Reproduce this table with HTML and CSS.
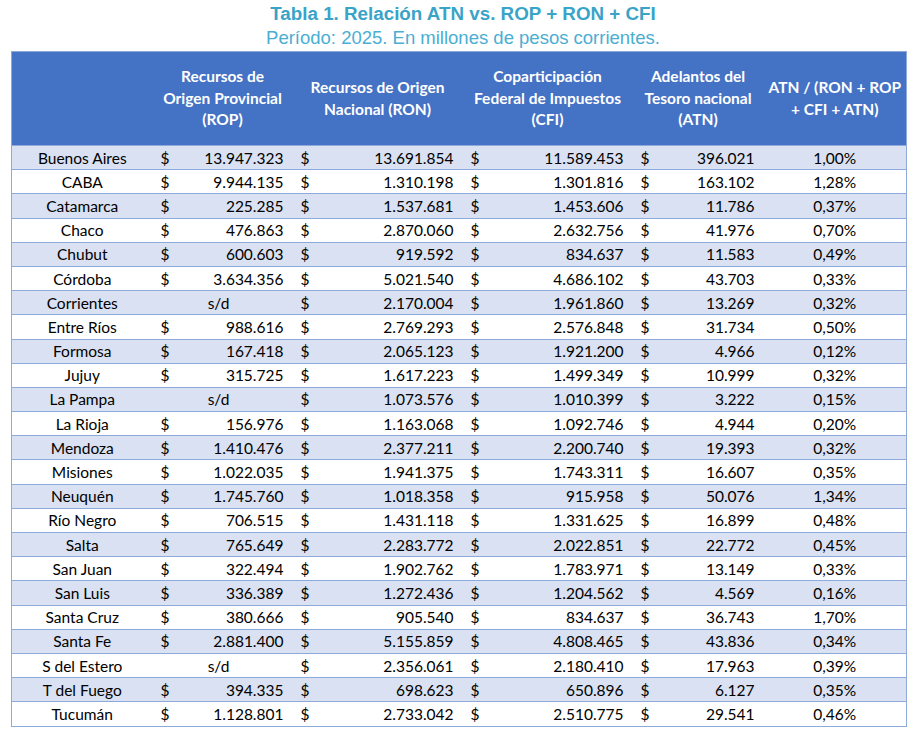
FILE: index.html
```html
<!DOCTYPE html>
<html lang="es">
<head>
<meta charset="utf-8">
<link rel="stylesheet" href="styles.css">
</head>
<body>
<div class="title">Tabla 1. Relación ATN vs. ROP + RON + CFI</div>
<div class="subtitle">Período: 2025. En millones de pesos corrientes.</div>
<table class="tbl">
<colgroup>
<col class="c-prov"><col class="c-rop-s"><col class="c-rop-n"><col class="c-ron-s"><col class="c-ron-n"><col class="c-cfi-s"><col class="c-cfi-n"><col class="c-atn-s"><col class="c-atn-n"><col class="c-pct">
</colgroup>
<thead>
<tr>
<th></th>
<th colspan="2">Recursos de<br>Origen Provincial<br>(ROP)</th>
<th colspan="2">Recursos de Origen<br>Nacional (RON)</th>
<th colspan="2">Coparticipación<br>Federal de Impuestos<br>(CFI)</th>
<th colspan="2">Adelantos del<br>Tesoro nacional<br>(ATN)</th>
<th>ATN / (RON + ROP<br>+ CFI + ATN)</th>
</tr>
</thead>
<tbody>
<tr><td class="prov">Buenos Aires</td><td class="s">$</td><td class="n">13.947.323</td><td class="s">$</td><td class="n">13.691.854</td><td class="s">$</td><td class="n">11.589.453</td><td class="s">$</td><td class="n">396.021</td><td class="p">1,00%</td></tr>
<tr><td class="prov">CABA</td><td class="s">$</td><td class="n">9.944.135</td><td class="s">$</td><td class="n">1.310.198</td><td class="s">$</td><td class="n">1.301.816</td><td class="s">$</td><td class="n">163.102</td><td class="p">1,28%</td></tr>
<tr><td class="prov">Catamarca</td><td class="s">$</td><td class="n">225.285</td><td class="s">$</td><td class="n">1.537.681</td><td class="s">$</td><td class="n">1.453.606</td><td class="s">$</td><td class="n">11.786</td><td class="p">0,37%</td></tr>
<tr><td class="prov">Chaco</td><td class="s">$</td><td class="n">476.863</td><td class="s">$</td><td class="n">2.870.060</td><td class="s">$</td><td class="n">2.632.756</td><td class="s">$</td><td class="n">41.976</td><td class="p">0,70%</td></tr>
<tr><td class="prov">Chubut</td><td class="s">$</td><td class="n">600.603</td><td class="s">$</td><td class="n">919.592</td><td class="s">$</td><td class="n">834.637</td><td class="s">$</td><td class="n">11.583</td><td class="p">0,49%</td></tr>
<tr><td class="prov">Córdoba</td><td class="s">$</td><td class="n">3.634.356</td><td class="s">$</td><td class="n">5.021.540</td><td class="s">$</td><td class="n">4.686.102</td><td class="s">$</td><td class="n">43.703</td><td class="p">0,33%</td></tr>
<tr><td class="prov">Corrientes</td><td class="sd" colspan="2">s/d</td><td class="s">$</td><td class="n">2.170.004</td><td class="s">$</td><td class="n">1.961.860</td><td class="s">$</td><td class="n">13.269</td><td class="p">0,32%</td></tr>
<tr><td class="prov">Entre Ríos</td><td class="s">$</td><td class="n">988.616</td><td class="s">$</td><td class="n">2.769.293</td><td class="s">$</td><td class="n">2.576.848</td><td class="s">$</td><td class="n">31.734</td><td class="p">0,50%</td></tr>
<tr><td class="prov">Formosa</td><td class="s">$</td><td class="n">167.418</td><td class="s">$</td><td class="n">2.065.123</td><td class="s">$</td><td class="n">1.921.200</td><td class="s">$</td><td class="n">4.966</td><td class="p">0,12%</td></tr>
<tr><td class="prov">Jujuy</td><td class="s">$</td><td class="n">315.725</td><td class="s">$</td><td class="n">1.617.223</td><td class="s">$</td><td class="n">1.499.349</td><td class="s">$</td><td class="n">10.999</td><td class="p">0,32%</td></tr>
<tr><td class="prov">La Pampa</td><td class="sd" colspan="2">s/d</td><td class="s">$</td><td class="n">1.073.576</td><td class="s">$</td><td class="n">1.010.399</td><td class="s">$</td><td class="n">3.222</td><td class="p">0,15%</td></tr>
<tr><td class="prov">La Rioja</td><td class="s">$</td><td class="n">156.976</td><td class="s">$</td><td class="n">1.163.068</td><td class="s">$</td><td class="n">1.092.746</td><td class="s">$</td><td class="n">4.944</td><td class="p">0,20%</td></tr>
<tr><td class="prov">Mendoza</td><td class="s">$</td><td class="n">1.410.476</td><td class="s">$</td><td class="n">2.377.211</td><td class="s">$</td><td class="n">2.200.740</td><td class="s">$</td><td class="n">19.393</td><td class="p">0,32%</td></tr>
<tr><td class="prov">Misiones</td><td class="s">$</td><td class="n">1.022.035</td><td class="s">$</td><td class="n">1.941.375</td><td class="s">$</td><td class="n">1.743.311</td><td class="s">$</td><td class="n">16.607</td><td class="p">0,35%</td></tr>
<tr><td class="prov">Neuquén</td><td class="s">$</td><td class="n">1.745.760</td><td class="s">$</td><td class="n">1.018.358</td><td class="s">$</td><td class="n">915.958</td><td class="s">$</td><td class="n">50.076</td><td class="p">1,34%</td></tr>
<tr><td class="prov">Río Negro</td><td class="s">$</td><td class="n">706.515</td><td class="s">$</td><td class="n">1.431.118</td><td class="s">$</td><td class="n">1.331.625</td><td class="s">$</td><td class="n">16.899</td><td class="p">0,48%</td></tr>
<tr><td class="prov">Salta</td><td class="s">$</td><td class="n">765.649</td><td class="s">$</td><td class="n">2.283.772</td><td class="s">$</td><td class="n">2.022.851</td><td class="s">$</td><td class="n">22.772</td><td class="p">0,45%</td></tr>
<tr><td class="prov">San Juan</td><td class="s">$</td><td class="n">322.494</td><td class="s">$</td><td class="n">1.902.762</td><td class="s">$</td><td class="n">1.783.971</td><td class="s">$</td><td class="n">13.149</td><td class="p">0,33%</td></tr>
<tr><td class="prov">San Luis</td><td class="s">$</td><td class="n">336.389</td><td class="s">$</td><td class="n">1.272.436</td><td class="s">$</td><td class="n">1.204.562</td><td class="s">$</td><td class="n">4.569</td><td class="p">0,16%</td></tr>
<tr><td class="prov">Santa Cruz</td><td class="s">$</td><td class="n">380.666</td><td class="s">$</td><td class="n">905.540</td><td class="s">$</td><td class="n">834.637</td><td class="s">$</td><td class="n">36.743</td><td class="p">1,70%</td></tr>
<tr><td class="prov">Santa Fe</td><td class="s">$</td><td class="n">2.881.400</td><td class="s">$</td><td class="n">5.155.859</td><td class="s">$</td><td class="n">4.808.465</td><td class="s">$</td><td class="n">43.836</td><td class="p">0,34%</td></tr>
<tr><td class="prov">S del Estero</td><td class="sd" colspan="2">s/d</td><td class="s">$</td><td class="n">2.356.061</td><td class="s">$</td><td class="n">2.180.410</td><td class="s">$</td><td class="n">17.963</td><td class="p">0,39%</td></tr>
<tr><td class="prov">T del Fuego</td><td class="s">$</td><td class="n">394.335</td><td class="s">$</td><td class="n">698.623</td><td class="s">$</td><td class="n">650.896</td><td class="s">$</td><td class="n">6.127</td><td class="p">0,35%</td></tr>
<tr><td class="prov">Tucumán</td><td class="s">$</td><td class="n">1.128.801</td><td class="s">$</td><td class="n">2.733.042</td><td class="s">$</td><td class="n">2.510.775</td><td class="s">$</td><td class="n">29.541</td><td class="p">0,46%</td></tr>
</tbody>
</table>
</body>
</html>
```
FILE: styles.css
```css
html, body {
  margin: 0;
  padding: 0;
  background: #ffffff;
}
body {
  width: 920px;
  height: 735px;
  overflow: hidden;
}
.title {
  font-family: "Liberation Sans", Arial, sans-serif;
  font-weight: bold;
  font-size: 18.8px;
  color: #3aa3c8;
  text-align: center;
  line-height: 22px;
  padding-top: 3px;
  padding-left: 6px;
}
.subtitle {
  font-family: "Liberation Sans", Arial, sans-serif;
  font-size: 18.5px;
  color: #4aaed3;
  text-align: center;
  line-height: 22px;
  padding-top: 2px;
  padding-left: 6px;
  margin-bottom: 2px;
}
.tbl {
  margin-left: 11px;
  width: 895px;
  border-collapse: collapse;
  table-layout: fixed;
  font-family: Lato, "Noto Sans", sans-serif;
  font-size: 15.5px;
  color: #000000;
  border: 1px solid #8eaadb;
}
.c-prov { width: 141px; }
.c-rop-s { width: 28px; }
.c-rop-n { width: 112px; }
.c-ron-s { width: 28px; }
.c-ron-n { width: 142px; }
.c-cfi-s { width: 28px; }
.c-cfi-n { width: 142px; }
.c-atn-s { width: 28px; }
.c-atn-n { width: 103px; }
.c-pct { width: 143px; }
.tbl thead tr {
  background: #4472c4;
  height: 94px;
}
.tbl th {
  color: #ffffff;
  font-weight: bold;
  font-size: 15.5px;
  line-height: 21.5px;
  text-align: center;
  vertical-align: middle;
  padding: 0 1px;
}
.tbl tbody tr {
  height: 24.2px;
  border-top: 1px solid #8eaadb;
}
.tbl tbody tr:nth-child(odd) {
  background: #d9e1f2;
}
.tbl td {
  padding: 0;
  line-height: 22px;
  white-space: nowrap;
}
.tbl td.prov {
  text-align: center;
}
.tbl td.s {
  text-align: left;
  padding-left: 8px;
}
.tbl td.n {
  text-align: right;
  padding-right: 9px;
}
.tbl td.sd {
  text-align: center;
  padding-right: 8px;
}
.tbl td.p {
  text-align: center;
}
```
